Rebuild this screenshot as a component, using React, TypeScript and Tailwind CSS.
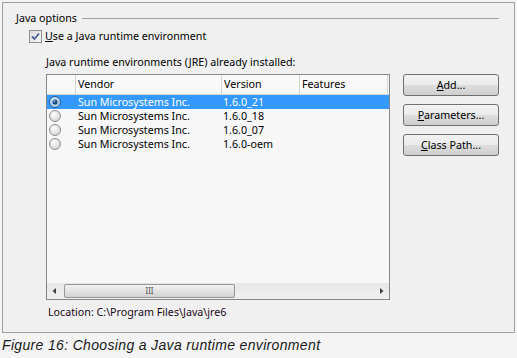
import React from 'react';

type Jre = { vendor: string; version: string; features: string };

const jres: Jre[] = [
    { vendor: 'Sun Microsystems Inc.', version: '1.6.0_21', features: '' },
    { vendor: 'Sun Microsystems Inc.', version: '1.6.0_18', features: '' },
    { vendor: 'Sun Microsystems Inc.', version: '1.6.0_07', features: '' },
    { vendor: 'Sun Microsystems Inc.', version: '1.6.0-oem', features: '' },
];

const Radio: React.FC<{ checked: boolean }> = ({ checked }) => (
    <svg width="12" height="12" viewBox="0 0 12 12">
        <defs>
            <radialGradient id={checked ? 'rg-on' : 'rg-off'} cx="0.4" cy="0.35" r="0.7">
                <stop offset="0" stopColor={checked ? '#d6ecff' : '#ffffff'} />
                <stop offset="1" stopColor={checked ? '#9cc3e6' : '#d2d2d2'} />
            </radialGradient>
        </defs>
        <circle cx="6" cy="6" r="5.5" fill={`url(#${checked ? 'rg-on' : 'rg-off'})`} stroke={checked ? '#2c5a8a' : '#8e8f8f'} />
        {checked && <circle cx="6" cy="6" r="2.6" fill="#1e4c7e" />}
        {checked && <circle cx="5.3" cy="5.2" r="1" fill="#7fb2e3" />}
    </svg>
);

const Button: React.FC<{ mnemonic: string; rest: string }> = ({ mnemonic, rest }) => (
    <button className="w-[96px] h-[22px] rounded-[3px] border border-[#707070] bg-[linear-gradient(#f2f2f2_0%,#ebebeb_50%,#dddddd_51%,#cfcfcf_100%)] text-[10.7px] text-black flex items-center justify-center">
        <span><span className="underline">{mnemonic}</span>{rest}</span>
    </button>
);

const App: React.FC = () => {
    return (
        <div className="w-[517px] h-[358px] bg-[#f4f4f4] font-['Noto_Sans',sans-serif] text-[10.7px] text-black">
            <div className="pt-[2px] px-[2px]">
                <div className="h-[331px] border border-[#a0a0a0] bg-[#f0f0f0] flex flex-col">
                    {/* group header */}
                    <div className="flex items-center h-[16px] mt-[7px] pl-[13px] pr-[15px]">
                        <span className="leading-none">Java options</span>
                        <div className="flex-1 ml-[5px] h-px bg-[#a0a0a0]" />
                    </div>

                    <div className="flex items-center h-[13px] mt-[4px] pl-[26px]">
                        <div className="w-[13px] h-[13px] border border-[#8e8f8f] bg-[linear-gradient(135deg,#dcdcdc,#f8f8f8)] flex items-center justify-center">
                            <svg width="9" height="9" viewBox="0 0 9 9">
                                <path d="M1 4.5 L3.5 7 L8 1.5" fill="none" stroke="#4a5f97" strokeWidth="1.8" />
                            </svg>
                        </div>
                        <span className="ml-[3px] leading-none"><span className="underline">U</span>se a Java runtime environment</span>
                    </div>

                    <div className="mt-[12px] pl-[43px] h-[14px] flex items-center">
                        <span className="leading-none"><span className="underline">J</span>ava runtime environments (JRE) already installed:</span>
                    </div>

                    <div className="flex mt-[5px] pl-[43px]">
                        {/* table */}
                        <div className="w-[344px] h-[226px] border border-[#828790] bg-[#f7f7f7] flex flex-col">
                            <div className="flex h-[20px] border-b border-[#d5d5d5] bg-[#f9f9f9]">
                                <div className="w-[29px] border-r border-[#d5d5d5]" />
                                <div className="w-[146px] border-r border-[#d5d5d5] pl-[2px] flex items-center">Vendor</div>
                                <div className="w-[78px] border-r border-[#d5d5d5] pl-[2px] flex items-center">Version</div>
                                <div className="w-[88px] border-r border-[#d5d5d5] pl-[2px] flex items-center">Features</div>
                            </div>
                            <div className="flex-1 flex flex-col">
                                {jres.map((j, i) => (
                                    <div key={j.version} className={`flex h-[14px] items-center ${i === 0 ? 'bg-[#3399ff] text-white' : ''}`}>
                                        <div className="w-[29px] pl-[2px] flex items-center"><Radio checked={i === 0} /></div>
                                        <div className="w-[146px] pl-[2px]">{j.vendor}</div>
                                        <div className="w-[78px] pl-[1px]">{j.version}</div>
                                        <div className="flex-1">{j.features}</div>
                                    </div>
                                ))}
                            </div>
                            {/* horizontal scrollbar */}
                            <div className="h-[16px] bg-[linear-gradient(#e6e6e6,#f0f0f0)] flex items-center px-[3px]">
                                <svg width="10" height="10" viewBox="0 0 10 10"><path d="M6 2 L2.5 5 L6 8 Z" fill="#404040" /></svg>
                                <div className="ml-[4px] w-[171px] h-[14px] rounded-[2px] border border-[#979797] bg-[linear-gradient(#f3f3f3,#e2e2e2_50%,#d3d3d3)] flex items-center justify-center">
                                    <span className="text-[8px] leading-none text-[#555] tracking-[0px]">III</span>
                                </div>
                                <div className="flex-1" />
                                <svg width="10" height="10" viewBox="0 0 10 10"><path d="M4 2 L7.5 5 L4 8 Z" fill="#404040" /></svg>
                            </div>
                        </div>

                        {/* buttons */}
                        <div className="ml-[13px] flex flex-col gap-[8px] pt-[0px]">
                            <Button mnemonic="A" rest="dd..." />
                            <Button mnemonic="P" rest="arameters..." />
                            <Button mnemonic="C" rest="lass Path..." />
                        </div>
                    </div>

                    <div className="mt-[5px] pl-[45px] h-[14px] flex items-center text-[#200818]">
                        <span className="leading-none">Location: C:\Program Files\Java\jre6</span>
                    </div>
                </div>
            </div>
            <div className="h-[25px] flex items-center pl-[2px] font-['Liberation_Sans',sans-serif] italic text-[14px] tracking-[0.34px] text-[#1a1a1a]">
                Figure 16: Choosing a Java runtime environment
            </div>
        </div>
    );
};

export default App;
